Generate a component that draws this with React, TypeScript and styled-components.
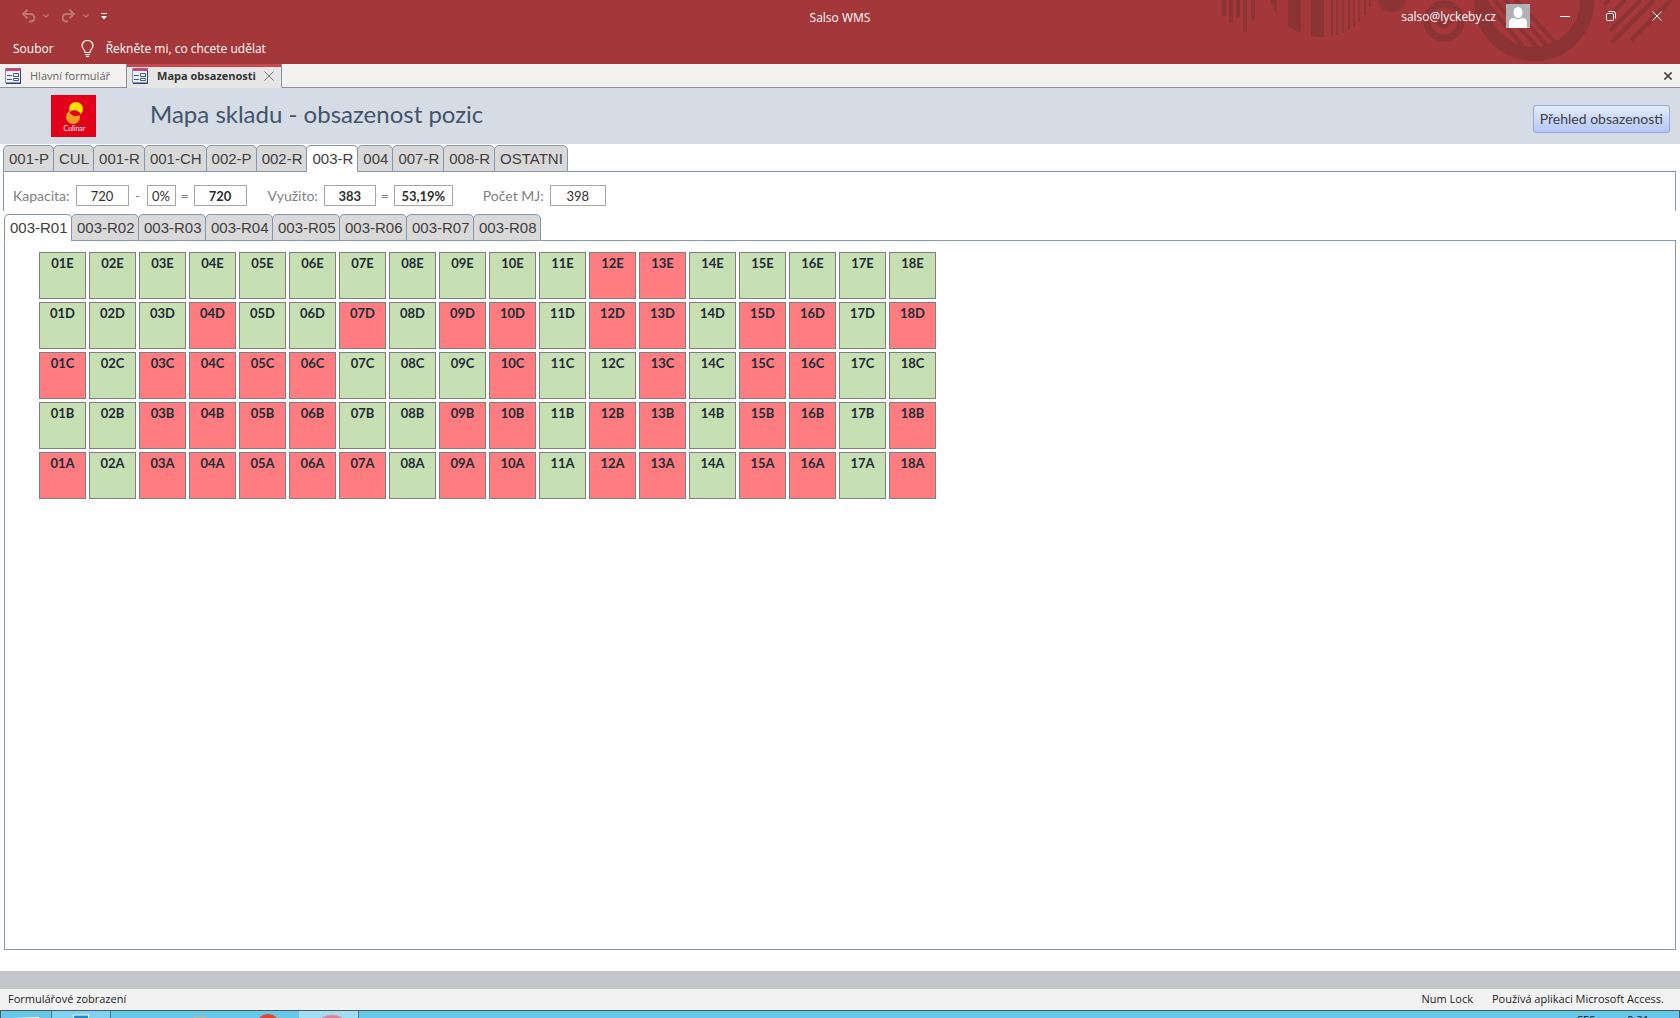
import React, { useState } from "react";
import styled, { createGlobalStyle } from "styled-components";

const UI = `"Open Sans", "Noto Sans", sans-serif`;
const FORM = `Lato, "Open Sans", sans-serif`;
const LINE = "#8497b0";

const GlobalStyle = createGlobalStyle`
  *, *::before, *::after { box-sizing: border-box; }
  html, body, #root { height: 100%; }
  body { margin: 0; background: #fff; font-family: ${UI}; font-size: 12px; overflow: hidden; }
  button, input { font: inherit; color: inherit; margin: 0; padding: 0; border-radius: 0; }
  button { border: 0; background: none; cursor: pointer; }
`;

const Window = styled.div`
  display: flex;
  flex-direction: column;
  height: 100vh;
`;

/* ---- title bar ---- */

const Ribbon = styled.header`
  position: relative;
  flex: none;
  background: #a4373a;
  color: #fff;
`;

const RibbonArt = styled.svg`
  position: absolute;
  top: 0;
  right: 0;
`;

const TitleBar = styled.div`
  position: relative;
  display: grid;
  grid-template-columns: 1fr auto 1fr;
  align-items: center;
  height: 32px;
`;

const QuickAccess = styled.div`
  display: flex;
  align-items: center;
  gap: 12px;
  padding-left: 21px;
`;

const SplitButton = styled.div`
  display: flex;
  align-items: center;
  gap: 7px;
`;

const IconButton = styled.button`
  display: flex;
  align-items: center;
  justify-content: center;
  &:disabled { opacity: 0.3; cursor: default; }
`;

const WindowTitle = styled.div`
  padding-top: 3px;
  line-height: 29px;
`;

const Account = styled.div`
  display: flex;
  align-items: center;
  justify-content: flex-end;
  height: 30px;
`;

const Avatar = styled.svg`
  margin: 0 12px 0 10px;
`;

const CaptionButton = styled(IconButton)`
  width: 46px;
  height: 30px;
`;

const MenuBar = styled.nav`
  position: relative;
  display: flex;
  align-items: center;
  height: 32px;
  padding: 0 12px 0 13px;
`;

const TellMe = styled.button`
  display: flex;
  align-items: center;
  gap: 12px;
  margin-left: 27px;
`;

/* ---- open documents ---- */

const DocumentBar = styled.div`
  display: flex;
  flex: none;
  height: 24px;
  background: #f3f2f0;
  border-bottom: 1px solid #8c919e;
`;

const DocumentTab = styled.div<{ $active?: boolean }>`
  display: flex;
  align-items: center;
  gap: 8px;
  height: 24px;
  padding: 0 ${(p) => (p.$active ? 7 : 16)}px 0 5px;
  border-right: 1px solid #8c919e;
  border-bottom: 1px solid ${(p) => (p.$active ? "#e6e6e6" : "#8c919e")};
  background: ${(p) => (p.$active ? "#e6e6e6" : "#f3f2f0")};
  box-shadow: ${(p) => (p.$active ? "inset 0 3px #c9484c" : "none")};
  color: ${(p) => (p.$active ? "#333" : "#666")};
  font-size: 11px;
  font-weight: ${(p) => (p.$active ? 700 : 400)};
`;

const DocumentClose = styled(IconButton)`
  margin-left: auto;
  width: 24px;
`;

/* ---- form ---- */

const FormHeader = styled.div`
  display: flex;
  flex: none;
  align-items: center;
  height: 56px;
  padding: 0 10px 0 51px;
  background: #d5dce6;
`;

const Heading = styled.h1`
  flex: 1;
  margin: 0 0 4px 54px;
  color: #44546a;
  font: 400 24px/30px ${FORM};
`;

const OverviewButton = styled.button`
  height: 28px;
  margin-top: 6px;
  padding: 0 6px;
  border: 1px solid #8faadc;
  border-radius: 3px;
  background: linear-gradient(#e4ebfb, #b4c7f6);
  color: #404040;
  font: 14px/24px ${FORM};
`;

const FormBody = styled.main`
  display: flex;
  flex: 1;
  flex-direction: column;
  min-height: 0;
  padding: 1px 4px 21px 3px;
  background: #fff;
`;

const TabRow = styled.div`
  position: relative;
  display: flex;
  flex: none;
  height: 27px;
`;

const Tab = styled.button<{ $width?: number }>`
  width: ${(p) => (p.$width ? p.$width + "px" : "auto")};
  height: 27px;
  padding: 0 4px 0 5px;
  border: 1px solid ${LINE};
  border-radius: 5px 5px 0 0;
  background: #d9d9d9;
  color: #404040;
  font: 15px/24px "Liberation Sans", Arial, sans-serif;
  white-space: nowrap;
  & + & { margin-left: -1px; }
  &[aria-selected="true"] {
    background: #fff;
    border-bottom-color: #fff;
  }
`;

const TabFiller = styled.div`
  flex: 1;
  border-bottom: 1px solid ${LINE};
`;

const Capacity = styled.div`
  display: flex;
  flex: none;
  align-items: center;
  height: 39px;
  margin-bottom: 3px;
  padding: 8px 9px 0;
  border: solid ${LINE};
  border-width: 0 1px;
  color: #7f7f7f;
  font: 14px/20px ${FORM};
`;

const Field = styled.label`
  display: flex;
  align-items: center;
  gap: 6px;
`;

const Value = styled.input<{ $width: number; $strong?: boolean }>`
  width: ${(p) => p.$width}px;
  height: 21px;
  border: 1px solid #a6a6a6;
  background: #fff;
  color: #303030;
  font-size: 13px;
  font-weight: ${(p) => (p.$strong ? 700 : 400)};
  text-align: center;
`;

const Sign = styled.span`
  width: 18px;
  text-align: center;
`;

const Gap = styled.span<{ $width: number }>`
  width: ${(p) => p.$width}px;
`;

const RackArea = styled.section`
  display: flex;
  flex: 1;
  flex-direction: column;
  min-height: 0;
  margin-left: 1px;
`;

const RackPanel = styled.div`
  flex: 1;
  padding: 11px 34px;
  border: solid ${LINE};
  border-width: 0 1px 1px;
`;

const Rack = styled.div`
  display: grid;
  grid-template-columns: repeat(18, 47px);
  grid-auto-rows: 47px;
  gap: 3px;
`;

const Slot = styled.button<{ $taken: boolean }>`
  display: flex;
  justify-content: center;
  padding-top: 1px;
  border: 1px solid #7f7f7f;
  background: ${(p) => (p.$taken ? "#ff7c80" : "#c6e0b4")};
  color: #222b35;
  font: 700 13px/18px ${FORM};
`;

const Splitter = styled.div`
  flex: none;
  height: 18px;
  background: #c5c6ca;
`;

const StatusBar = styled.footer`
  display: flex;
  flex: none;
  gap: 19px;
  height: 21px;
  padding: 0 16px 0 8px;
  background: #f2f2f2;
  color: #262626;
  font-size: 11px;
  line-height: 20px;
`;

const StatusMode = styled.span`
  flex: 1;
`;

/* ---- desktop task bar, only its top edge is on screen ---- */

const TaskBar = styled.div`
  display: flex;
  flex: none;
  height: 8px;
  overflow: hidden;
  border: solid #4c5a60;
  border-width: 1px 1px 0;
  background: #66c9ea;
`;

const TaskItem = styled.div<{ $width: number; $tone?: string }>`
  display: flex;
  flex: none;
  justify-content: center;
  width: ${(p) => p.$width}px;
  border-right: ${(p) => (p.$tone ? "1px solid #3d7d92" : "0")};
  background: ${(p) => p.$tone ?? "transparent"};
`;

const Clock = styled.div`
  display: flex;
  gap: 32px;
  margin-left: auto;
  padding: 3px 30px 0 0;
  color: #111;
  font-size: 11px;
  line-height: 12px;
`;

function FormIcon() {
  return (
    <svg width="17" height="16" viewBox="0 0 17 16">
      <rect x="0.5" y="0.5" width="15" height="14" fill="#eef2fb" stroke="#8a97ba" />
      <path d="M1 15.500h15M15.500 3v13" stroke="#2f4478" />
      <rect x="1" y="0" width="15" height="3" fill="#c4487c" />
      <path d="M2 7.500h5M2 11.500h5" stroke="#44598c" />
      <path d="M8.500 5.500h5v3h-5zM8.500 10.500h5v2h-5z" fill="#fff" stroke="#44598c" />
    </svg>
  );
}

function Cross({ size, color = "currentColor", width = 1 }: { size: number; color?: string; width?: number }) {
  return (
    <svg width={size} height={size} viewBox="0 0 10 10">
      <path d="M0.500 0.500l9 9M9.500 0.500l-9 9" stroke={color} strokeWidth={width} fill="none" />
    </svg>
  );
}

function Chevron() {
  return (
    <svg width="6" height="4" viewBox="0 0 6 4">
      <path d="M0.500 0.500L3 3l2.500-2.500" stroke="#fff" strokeWidth="1.300" fill="none" />
    </svg>
  );
}

function Arrow({ flip }: { flip?: boolean }) {
  return (
    <svg width="15" height="14" viewBox="0 0 15 14">
      <g transform={flip ? "matrix(-1 0 0 1 15 0)" : undefined} fill="none" stroke="#fff" strokeWidth="2">
        <path d="M6.500 0.700L2 5l4.500 4.300" />
        <path d="M2 5h7.500c5 0 5 7.500 0 7.500H8" />
      </g>
    </svg>
  );
}

function Art() {
  const thin = [1331, 1336, 1342, 1348, 1353, 1358, 1364, 1369];
  const thinEnd = [36, 35, 33, 30, 26, 22, 15, 7];
  return (
    <RibbonArt width="480" height="64" viewBox="1200 0 480 64" fill="#8b3335" aria-hidden>
      <path d="M1222 0h4v16h-4zM1229 0h4v23h-4zM1236 0h4v17h-4zM1243 0h4v32h-4zM1251 0h4v20h-4z" />
      <path d="M1270 0h7v14q-4-6-7-14zM1288 0h13v33q-7-3-13-7zM1311 0h13v37q-7 0-13-1z" />
      {thin.map((x, i) => (
        <rect key={x} x={x} y="0" width="2" height={thinEnd[i]} />
      ))}
      <circle cx="1392" cy="-2" r="14" />
      <g fill="none" stroke="#8b3335">
        <circle cx="1444" cy="21" r="17" strokeWidth="7" />
        <circle cx="1444" cy="21" r="5" strokeWidth="5" />
        <circle cx="1534" cy="1" r="53" strokeWidth="14" />
        <path d="M1484 0l42 50M1494 0l44 48M1505 0l42 46M1516 0l39 42" strokeWidth="4" />
        <path d="M1604 5l5-5M1607 18l18-18M1610 31l31-31M1611 43l43-43M1631 40l40-40" strokeWidth="4" />
      </g>
    </RibbonArt>
  );
}

function Logo() {
  return (
    <svg width="45" height="42" viewBox="0 0 45 42" role="img" aria-label="Culinar">
      <rect width="45" height="42" fill="#e2001a" />
      <circle cx="25" cy="14" r="7" fill="#ffe000" />
      <circle cx="22" cy="22" r="7" fill="#f0a020" />
      <path d="M18.500 17q4-3 8-1t2.500 4q-4 2-7 0.500t-3.500-3.500z" fill="#e2001a" />
      <text x="23.500" y="36" fill="#fff" fontSize="7" fontFamily="Lato, sans-serif" textAnchor="middle">
        Culinar
      </text>
    </svg>
  );
}

const warehouses = ["001-P", "CUL", "001-R", "001-CH", "002-P", "002-R", "003-R", "004", "007-R", "008-R", "OSTATNI"];
const racks = ["003-R01", "003-R02", "003-R03", "003-R04", "003-R05", "003-R06", "003-R07", "003-R08"];

const taken: [string, number[]][] = [
  ["E", [12, 13]],
  ["D", [4, 7, 9, 10, 12, 13, 15, 16, 18]],
  ["C", [1, 3, 4, 5, 6, 10, 13, 15, 16]],
  ["B", [3, 4, 5, 6, 9, 10, 12, 13, 15, 16, 18]],
  ["A", [1, 3, 4, 5, 6, 7, 9, 10, 12, 13, 15, 16, 18]],
];

function Tabs({ items, initial, tabWidth }: { items: string[]; initial: string; tabWidth?: number }) {
  const [current, setCurrent] = useState(initial);
  return (
    <TabRow role="tablist">
      {items.map((name) => (
        <Tab
          key={name}
          role="tab"
          $width={tabWidth}
          aria-selected={name === current}
          onClick={() => setCurrent(name)}
        >
          {name}
        </Tab>
      ))}
      <TabFiller />
    </TabRow>
  );
}

export default function App() {
  return (
    <Window>
      <GlobalStyle />
      <Ribbon>
        <Art />
        <TitleBar>
          <QuickAccess>
            <SplitButton>
              <IconButton disabled aria-label="Zpět"><Arrow /></IconButton>
              <IconButton disabled aria-label="Možnosti zpět"><Chevron /></IconButton>
            </SplitButton>
            <SplitButton>
              <IconButton disabled aria-label="Znovu"><Arrow flip /></IconButton>
              <IconButton disabled aria-label="Možnosti znovu"><Chevron /></IconButton>
            </SplitButton>
            <IconButton aria-label="Přizpůsobit panel">
              <svg width="6" height="7" viewBox="0 0 6 7" fill="#fff">
                <path d="M0 0h6v1H0zM0 3h6L3 6.500z" />
              </svg>
            </IconButton>
          </QuickAccess>
          <WindowTitle>Salso WMS</WindowTitle>
          <Account>
            <span>salso@lyckeby.cz</span>
            <Avatar width="24" height="24" viewBox="0 0 24 24" aria-hidden>
              <rect width="24" height="24" fill="#b1b1b1" />
              <ellipse cx="12" cy="8.500" rx="4.500" ry="5.500" fill="#fff" />
              <path d="M3 24v-5q0-5 5-5 4 2.500 8 0 5 0 5 5v5z" fill="#fff" />
            </Avatar>
            <CaptionButton aria-label="Minimalizovat">
              <svg width="10" height="1"><rect width="10" height="1" fill="#fff" /></svg>
            </CaptionButton>
            <CaptionButton aria-label="Obnovit">
              <svg width="10" height="10" viewBox="0 0 10 10" fill="none" stroke="#fff">
                <rect x="0.500" y="2.500" width="7" height="7" rx="1" />
                <path d="M2.500 0.500h5q2 0 2 2v5" />
              </svg>
            </CaptionButton>
            <CaptionButton aria-label="Zavřít"><Cross size={10} /></CaptionButton>
          </Account>
        </TitleBar>
        <MenuBar>
          <button>Soubor</button>
          <TellMe>
            <svg width="13" height="17" viewBox="0 0 13 17" fill="none" stroke="#fff" strokeWidth="1.200">
              <path d="M4 12.500c0-3-3-4-3-7a5.500 5 0 0 1 11 0c0 3-3 4-3 7zM4 14.500h5M5 16.300h3" />
            </svg>
            Řekněte mi, co chcete udělat
          </TellMe>
        </MenuBar>
      </Ribbon>

      <DocumentBar>
        <DocumentTab><FormIcon />Hlavní formulář</DocumentTab>
        <DocumentTab $active>
          <FormIcon />
          Mapa obsazenosti
          <IconButton aria-label="Zavřít kartu"><Cross size={10} color="#777" /></IconButton>
        </DocumentTab>
        <DocumentClose aria-label="Zavřít formulář"><Cross size={8} color="#444" width={2} /></DocumentClose>
      </DocumentBar>

      <FormHeader>
        <Logo />
        <Heading>Mapa skladu - obsazenost pozic</Heading>
        <OverviewButton>Přehled obsazenosti</OverviewButton>
      </FormHeader>

      <FormBody>
        <Tabs items={warehouses} initial="003-R" />
        <Capacity>
          <Field>Kapacita:<Value $width={53} defaultValue="720" /></Field>
          <Sign>-</Sign>
          <Value aria-label="Rezerva" $width={29} defaultValue="0%" />
          <Sign>=</Sign>
          <Value aria-label="Kapacita po odečtu" $width={53} $strong defaultValue="720" />
          <Gap $width={21} />
          <Field>Využito:<Value $width={52} $strong defaultValue="383" /></Field>
          <Sign>=</Sign>
          <Value aria-label="Využito v procentech" $width={59} $strong defaultValue="53,19%" />
          <Gap $width={30} />
          <Field>Počet MJ:<Value $width={56} defaultValue="398" /></Field>
        </Capacity>
        <RackArea>
          <Tabs items={racks} initial="003-R01" tabWidth={68} />
          <RackPanel>
            <Rack>
              {taken.map(([level, list]) =>
                Array.from({ length: 18 }, (_, i) => (
                  <Slot key={level + i} $taken={list.includes(i + 1)}>
                    {String(i + 1).padStart(2, "0") + level}
                  </Slot>
                ))
              )}
            </Rack>
          </RackPanel>
        </RackArea>
      </FormBody>

      <Splitter />
      <StatusBar>
        <StatusMode>Formulářové zobrazení</StatusMode>
        <span>Num Lock</span>
        <span>Používá aplikaci Microsoft Access.</span>
      </StatusBar>
      <TaskBar>
        <TaskItem $width={51} $tone="#66c9ea">
          <svg width="26" height="7"><path d="M0 7l26-1v1z" fill="#fff" /></svg>
        </TaskItem>
        <TaskItem $width={59} $tone="#7fd3f0">
          <svg width="43" height="7"><path d="M13 3.500h16V7H13z" fill="#fff" /><path d="M14 4.500h14V7H14z" fill="#1e88d8" /></svg>
        </TaskItem>
        <TaskItem $width={188}>
          <svg width="188" height="7"><path d="M82 6h13v1H82z" fill="#d9b36a" /><ellipse cx="157" cy="12" rx="11" ry="9" fill="#e8432e" /></svg>
        </TaskItem>
        <TaskItem $width={60} $tone="#a3ddf3">
          <svg width="30" height="7"><ellipse cx="18" cy="10" rx="12" ry="6" fill="#e27d92" /></svg>
        </TaskItem>
        <Clock><span>CES</span><span>9:31</span></Clock>
      </TaskBar>
    </Window>
  );
}
